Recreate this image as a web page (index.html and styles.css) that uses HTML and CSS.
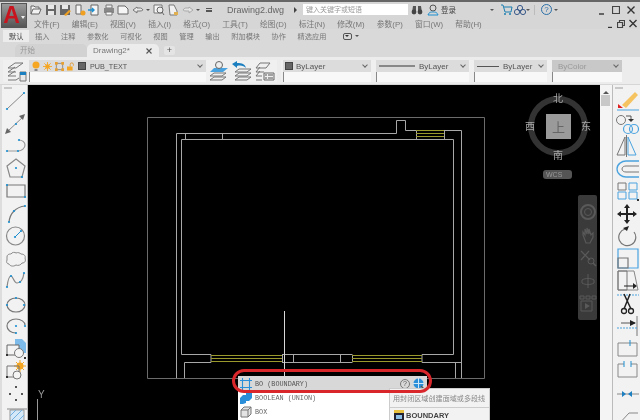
FILE: index.html
```html
<!DOCTYPE html>
<html lang="en">
<head>
    <meta charset="UTF-8">
    <title>Drawing2.dwg</title>
    <link rel="stylesheet" href="styles.css">
</head>
<body>
    <header class="top">
        <div class="logo"><span class="logo-a">A</span><span class="logo-arrow"></span></div>
        <div class="top-rows">
            <div class="title-row">
                <div class="quick">
                    <svg width="12" height="12" viewBox="0 0 12 12"><path d="M1 10V2h3l1 1h4v2M1 10l2-5h8l-2 5z" fill="#f2f2f2" stroke="#666"/></svg>
                    <svg width="12" height="12" viewBox="0 0 12 12"><path d="M1 1h10v10H1z" fill="#666"/><path d="M3 1h6v4H3zM3 7h6v4H3z" fill="#e8e8e8"/></svg>
                    <svg width="12" height="12" viewBox="0 0 12 12"><path d="M1 1h10v10H1z" fill="#666"/><path d="M3 1h6v4H3z" fill="#e8e8e8"/><path d="M5 11l5-5 2 1-5 5z" fill="#f0a020"/></svg>
                    <svg width="12" height="12" viewBox="0 0 12 12"><path d="M2 1h5v9H2z" fill="#f5f5f5" stroke="#666"/><circle cx="9" cy="9" r="2.5" fill="#f0a020"/></svg>
                    <svg width="12" height="12" viewBox="0 0 12 12"><path d="M3 1h7v10H3z" fill="#f5f5f5" stroke="#666"/><path d="M0 6h6M4 4l2 2-2 2" fill="none" stroke="#1c8fd0" stroke-width="1.4"/></svg>
                    <svg width="12" height="12" viewBox="0 0 12 12"><path d="M3 1h6v3H3z" fill="#eee" stroke="#777"/><path d="M1 4h10v5H1z" fill="#888"/><path d="M3 8h6v3H3z" fill="#fff" stroke="#777"/></svg>
                    <svg width="12" height="12" viewBox="0 0 12 12"><path d="M1 2h7l3 3v5H1z" fill="#f5f5f5" stroke="#666"/></svg>
                    <svg width="12" height="12" viewBox="0 0 12 12"><path d="M5 3L1 6l4 3V7h3c2 0 3-1 3-1-1-2-3-2-3-2H5z" fill="#e8e8e8" stroke="#777"/></svg>
                    <span class="caret"></span>
                    <svg width="12" height="12" viewBox="0 0 12 12"><path d="M1 1h8v8H1z" fill="#f5f5f5" stroke="#777"/><circle cx="7" cy="6" r="3" fill="#eee" stroke="#666"/><path d="M9 8l2 3" stroke="#666"/></svg>
                    <svg width="12" height="12" viewBox="0 0 12 12"><path d="M2 1h5l3 6v4H3z" fill="#f0f0f0" stroke="#777"/><path d="M7 8h4v3H7z" fill="#e0b050"/></svg>
                    <svg width="12" height="12" viewBox="0 0 12 12"><path d="M7 3l4 3-4 3V7H4C2 7 1 6 1 6c1-2 3-2 3-2h3z" fill="#e4e4e4" stroke="#aaa"/></svg>
                    <span class="caret"></span>
                    <span class="more"></span>
                </div>
                <div class="doc-title">Drawing2.dwg</div>
                <span class="play"></span>
                <div class="search">键入关键字或短语</div>
                <svg class="binoc" width="12" height="11" viewBox="0 0 12 11"><path d="M1 9l1-7h3v7zM7 9V2h3l1 7z" fill="#555"/><circle cx="3" cy="8" r="2.4" fill="#444"/><circle cx="9" cy="8" r="2.4" fill="#444"/></svg>
                <svg class="user" width="12" height="12" viewBox="0 0 12 12"><circle cx="6" cy="4" r="3" fill="none" stroke="#555"/><path d="M1 11c1-3 3-3 5-3s4 0 5 3z" fill="none" stroke="#1c8fd0"/></svg>
                <span class="login">登录</span>
                <span class="caret caret-login"></span>
                <svg class="cart" width="13" height="12" viewBox="0 0 13 12"><path d="M1 1h2l2 7h6l1-5H4" fill="none" stroke="#1c7fb0"/><circle cx="5" cy="10" r="1" fill="#1c7fb0"/><circle cx="10" cy="10" r="1" fill="#1c7fb0"/></svg>
                <svg class="people" width="12" height="12" viewBox="0 0 12 12"><circle cx="6" cy="4" r="2.6" fill="none" stroke="#3a5a8a"/><circle cx="3" cy="8" r="2.6" fill="none" stroke="#3a5a8a"/><circle cx="9" cy="8" r="2.6" fill="none" stroke="#3a5a8a"/></svg>
                <span class="caret"></span>
                <span class="sep"></span>
                <span class="help">?</span>
                <span class="caret"></span>
                <div class="win-ctrl">
                    <svg width="7" height="10" viewBox="0 0 7 10"><path d="M1 9h5" stroke="#333" stroke-width="1.400"/></svg>
                    <svg width="8" height="10" viewBox="0 0 8 10"><path d="M.5 1.500h7v7h-7z" fill="none" stroke="#444" stroke-width="1.200"/></svg>
                    <svg width="8" height="10" viewBox="0 0 8 10"><path d="M.5 1.500l7 7M7.500 1.500l-7 7" stroke="#333" stroke-width="1.400"/></svg>
                </div>
            </div>
            <nav class="menu-row">
                <span>文件(F)</span><span>编辑(E)</span><span>视图(V)</span><span>插入(I)</span><span>格式(O)</span><span>工具(T)</span>
                <span>绘图(D)</span><span>标注(N)</span><span>修改(M)</span><span>参数(P)</span><span>窗口(W)</span><span>帮助(H)</span>
                <div class="win-ctrl small">
                    <svg width="6" height="9" viewBox="0 0 6 9"><path d="M1 8.500h4" stroke="#333" stroke-width="1.400"/></svg>
                    <svg width="8" height="9" viewBox="0 0 8 9"><path d="M.5 3.500h5v5h-5zM2.500 3.500v-2h5v5h-2" fill="none" stroke="#444" stroke-width="1.200"/></svg>
                    <svg width="8" height="9" viewBox="0 0 8 9"><path d="M.5 1l7 7M7.500 1l-7 7" stroke="#333" stroke-width="1.400"/></svg>
                </div>
            </nav>
        </div>
    </header>

    <nav class="ribbon-tabs">
        <span class="active">默认</span><span>插入</span><span>注释</span><span>参数化</span><span>可视化</span><span>视图</span>
        <span>管理</span><span>输出</span><span>附加模块</span><span>协作</span><span>精选应用</span>
        <span class="tab-drop"><i></i></span><span class="caret"></span>
    </nav>

    <div class="doc-tabs">
        <div class="doc-tab">开始</div>
        <div class="doc-tab current">Drawing2*
            <svg class="tab-close" width="6" height="6" viewBox="0 0 6 6"><path d="M.5.500l5 5M5.500.500l-5 5" stroke="#555" stroke-width="1.100"/></svg>
        </div>
        <div class="doc-add">+</div>
    </div>

    <div class="toolbar">
        <div class="tool-group layer-group">
            <svg width="20" height="22" viewBox="0 0 20 22"><path d="M1 8l7-5h8l-7 5zM1 12l7-5M1 16l7-5M1 12h8M1 16h8M1 20h8l3-2" fill="none" stroke="#777"/><path d="M13 12h6v9h-6z" fill="#e8e8e8" stroke="#777"/><path d="M13 12h6v3h-6z" fill="#1c7fc0"/></svg>
            <div class="combo-stack layer-combo">
                <div class="combo">
                    <svg width="8" height="10" viewBox="0 0 8 10"><circle cx="4" cy="4" r="3.500" fill="#f5a623"/><path d="M2.500 8h3v2h-3z" fill="#888"/></svg>
                    <svg width="9" height="9" viewBox="0 0 10 10"><circle cx="5" cy="5" r="2.600" fill="#f5a623"/><path d="M5 0v10M0 5h10M1.500 1.500l7 7M8.500 1.500l-7 7" stroke="#f5a623"/></svg>
                    <svg width="9" height="9" viewBox="0 0 10 10"><path d="M1.500 1.500h7v7h-7z" fill="none" stroke="#888"/><path d="M0 0h3v3H0zM7 0h3v3H7zM0 7h3v3H0zM7 7h3v3H7z" fill="#e8a030"/></svg>
                    <svg width="8" height="9" viewBox="0 0 10 10"><path d="M0 5h7v5H0z" fill="#f5a623"/><path d="M4 5V2.500a2 2 0 0 1 4 0V4" fill="none" stroke="#e09020"/></svg>
                    <span class="swatch"></span>
                    <span class="combo-text">PUB_TEXT</span>
                    <span class="chev"></span>
                </div>
                <div class="combo-under"></div>
            </div>
            <div class="layer-tools">
                <svg width="20" height="20" viewBox="0 0 20 20"><path d="M1 19l4-3h12l-4 3zM1 15l4-3h12l-4 3z" fill="none" stroke="#777"/><path d="M1 11l4-4h14l-5 4z" fill="#4aa3df"/><circle cx="10" cy="4" r="3.500" fill="#eee" stroke="#666"/></svg>
                <svg width="20" height="20" viewBox="0 0 20 20"><path d="M3 19l4-3h12l-4 3zM3 15l4-3h12l-4 3zM3 11l4-3h12l-4 3z" fill="none" stroke="#777"/><path d="M0 3l5-3v2c5 0 8 1 9 5-2-2-5-3-9-2v2z" fill="#1c7fc0"/></svg>
                <svg width="20" height="20" viewBox="0 0 20 20"><path d="M1 7l4-5h10l-4 5zM1 11l4-5M1 15l4-5M1 11h8M1 15h6M1 19h6" fill="none" stroke="#777"/><path d="M9 12h10v7H9z" fill="#eee" stroke="#666"/><path d="M10 14h2M13 14h5M10 17h2M13 17h5" stroke="#555"/></svg>
            </div>
        </div>
        <div class="tool-group prop-group">
            <div class="combo-stack w1">
                <div class="combo"><span class="swatch"></span><span class="combo-text">ByLayer</span><span class="chev"></span></div>
                <div class="combo-under"></div>
            </div>
            <div class="combo-stack w2">
                <div class="combo"><span class="line thick"></span><span class="combo-text">ByLayer</span><span class="chev"></span></div>
                <div class="combo-under"></div>
            </div>
            <div class="combo-stack w3">
                <div class="combo"><span class="line"></span><span class="combo-text">ByLayer</span><span class="chev"></span></div>
                <div class="combo-under"></div>
            </div>
            <div class="combo-stack w4">
                <div class="combo disabled"><span class="combo-text">ByColor</span><span class="chev"></span></div>
                <div class="combo-under"></div>
            </div>
        </div>
    </div>

    <main class="workspace">
        <aside class="side-tools left">
            <svg width="24" height="22" viewBox="0 0 24 22"><path d="M4 19L21 3" stroke="#888"/><circle cx="4" cy="19" r="1.100" fill="#1c8fd0"/><circle cx="21" cy="3" r="1.100" fill="#1c8fd0"/></svg>
            <svg width="24" height="22" viewBox="0 0 24 22"><path d="M4 19L21 3" stroke="#888"/><path d="M2 21l2-6 4 4zM22 1l-2 6-4-4z" fill="#666"/><circle cx="13" cy="11" r="1.100" fill="#1c8fd0"/></svg>
            <svg width="24" height="22" viewBox="0 0 24 22"><path d="M4 16h11c4 0 7-3 7-6s-3-5-6-5" fill="none" stroke="#999" stroke-width="1.200"/><circle cx="4" cy="16" r="1.100" fill="#1c8fd0"/><circle cx="15" cy="16" r="1.100" fill="#1c8fd0"/><circle cx="16" cy="5" r="1.100" fill="#1c8fd0"/></svg>
            <svg width="24" height="22" viewBox="0 0 24 22"><path d="M13 1l9 7-3 11H7L4 8z" fill="none" stroke="#888" stroke-width="1.200"/><circle cx="13" cy="10" r="1.100" fill="#1c8fd0"/><circle cx="19" cy="19" r="1.100" fill="#1c8fd0"/></svg>
            <svg width="24" height="22" viewBox="0 0 24 22"><path d="M4 5h18v12H4z" fill="none" stroke="#777" stroke-width="1.200"/><circle cx="4" cy="5" r="1.100" fill="#1c8fd0"/><circle cx="22" cy="17" r="1.100" fill="#1c8fd0"/></svg>
            <svg width="24" height="22" viewBox="0 0 24 22"><path d="M6 19C7 10 13 4 22 3" fill="none" stroke="#777" stroke-width="1.200"/><circle cx="6" cy="19" r="1.100" fill="#1c8fd0"/><circle cx="11" cy="8" r="1.100" fill="#1c8fd0"/><circle cx="22" cy="3" r="1.100" fill="#1c8fd0"/></svg>
            <svg width="24" height="22" viewBox="0 0 24 22"><circle cx="12.500" cy="11" r="9" fill="none" stroke="#888" stroke-width="1.200"/><path d="M12 12l6-6" stroke="#1c8fd0"/><circle cx="12" cy="12" r="1.100" fill="#1c8fd0"/><circle cx="18" cy="6" r="1.100" fill="#1c8fd0"/></svg>
            <svg width="24" height="22" viewBox="0 0 24 22"><path d="M4 8c0-3 3-3 4-3 1-2 4-2 5-1 2-1 4 0 5 1 3 0 5 2 4 4 1 3 0 5-3 5-1 2-4 3-6 2-3 2-6 1-7-1-2 0-3-2-2-4z" transform="translate(0 1)" fill="none" stroke="#888"/></svg>
            <svg width="24" height="22" viewBox="0 0 24 22"><path d="M4 17c1-8 2-11 4-11 2 0 3 7 6 7s6-3 7-10" fill="none" stroke="#888" stroke-width="1.200"/><circle cx="4" cy="17" r="1.100" fill="#1c8fd0"/><circle cx="8" cy="6" r="1.100" fill="#1c8fd0"/><circle cx="17" cy="12" r="1.100" fill="#1c8fd0"/><circle cx="21" cy="3" r="1.100" fill="#1c8fd0"/></svg>
            <svg width="24" height="22" viewBox="0 0 24 22"><ellipse cx="13" cy="12" rx="9" ry="7" fill="none" stroke="#777" stroke-width="1.200"/><circle cx="4" cy="12" r="1.100" fill="#1c8fd0"/><circle cx="13" cy="5" r="1.100" fill="#1c8fd0"/><circle cx="21" cy="12" r="1.100" fill="#1c8fd0"/></svg>
            <svg width="24" height="22" viewBox="0 0 24 22"><path d="M22 10c0-3-4-6-9-6S4 7 4 11s4 7 9 7" fill="none" stroke="#777" stroke-width="1.200"/><circle cx="13" cy="11" r="1.100" fill="#1c8fd0"/><circle cx="22" cy="11" r="1.100" fill="#1c8fd0"/><circle cx="13" cy="18" r="1.100" fill="#1c8fd0"/></svg>
            <svg width="24" height="22" viewBox="0 0 24 22"><path d="M12 1h7l4 4v10H12z" fill="#7dbcea"/><path d="M4 7h12v10H4z" fill="#f4f4f4" stroke="#666"/><circle cx="16" cy="15" r="4.500" fill="#f4f4f4" stroke="#777"/><path d="M3 16h2v2H3zM21 19h2v2h-2z" fill="#333"/></svg>
            <svg width="24" height="22" viewBox="0 0 24 22"><circle cx="17" cy="6" r="3.500" fill="#f5a623"/><path d="M17 0v12M11 6h12M13 2l8 8M21 2l-8 8" stroke="#f5a623"/><path d="M4 6h12v11H4z" fill="none" stroke="#777"/><circle cx="14" cy="15" r="4" fill="#f4f4f4" stroke="#777"/><path d="M3 16h2v2H3z" fill="#333"/></svg>
            <svg width="24" height="22" viewBox="0 0 24 22"><path d="M12 3h2v2h-2zM6 10h2v2H6zM18 10h2v2h-2zM12 16h2v2h-2z" fill="#555"/></svg>
            <svg width="24" height="22" viewBox="0 0 24 22"><path d="M7 5h14v17H7z" fill="#d4e8f7" stroke="#999"/><path d="M7 11l6-6M7 17l12-12M9 22l12-12M15 22l6-6" stroke="#6fb0e0"/><path d="M4 4h20" stroke="#888"/></svg>
        </aside>

        <div class="canvas">
            <svg class="drawing" viewBox="28 85 572 335" width="572" height="335">
                <path d="M147.500 117.500H484.500V378.500H232M147.500 117.500V378.500H232" fill="none" stroke="#6b6b6b"/>
                <g fill="none" stroke="#a8a8a8">
                    <path d="M176.500 378V133.500H396.500V120.500H405.500V130.500H461.500V378"/>
                    <path d="M185.500 133.500V139M222.500 133.500V139"/>
                    <path d="M181.500 354.500V139.500H453.500V354.500H422V362.500H461.500M455.500 362.500V378"/>
                    <path d="M181.500 354.500H211V362.500H184.500V378"/>
                    <path d="M282.500 354.500V362.500M293.500 354.500V362.500M340.500 354.500V362.500M352.500 354.500V362.500M282 354.500H352M282 362.500H352"/>
                    <path d="M416.500 130V139M444.500 130V139"/>
                </g>
                <path d="M284.500 311V376" stroke="#d8d8d8"/>
                <g stroke="#9a9a2c">
                    <path d="M416 130.500H444M416 133.500H444M416 136.500H444"/>
                    <path d="M211 355.500H282M211 358.500H282M211 361.500H282"/>
                    <path d="M352 355.500H422M352 358.500H422M352 361.500H422"/>
                </g>
                <text class="axis-y" x="38" y="398">Y</text>
                <path d="M37.500 399V420" stroke="#999"/>
            </svg>

            <div class="viewcube">
                <div class="ring"></div>
                <div class="cube-face"><span>上</span></div>
                <span class="dir north">北</span>
                <span class="dir south">南</span>
                <span class="dir west">西</span>
                <span class="dir east">东</span>
            </div>
            <div class="wcs">WCS<i></i></div>

            <div class="navbar">
                <svg width="18" height="18" viewBox="0 0 18 18"><circle cx="9" cy="9" r="7" fill="none" stroke="#595959" stroke-width="2"/><circle cx="9" cy="9" r="3.500" fill="none" stroke="#595959"/></svg>
                <svg width="18" height="18" viewBox="0 0 18 18"><path d="M4 9V6l2 3V3l2 5V2l2 6V3l2 6 2-2v4l-3 6H7z" fill="none" stroke="#595959" stroke-width="1.200"/></svg>
                <svg width="18" height="18" viewBox="0 0 18 18"><path d="M2 2l9 9M2 11l8-9" stroke="#595959" stroke-width="1.200"/><circle cx="12" cy="12" r="3" fill="none" stroke="#595959"/><path d="M14 14l3 3" stroke="#595959" stroke-width="1.500"/></svg>
                <svg width="18" height="18" viewBox="0 0 18 18"><path d="M9 2v14M3 8c3-2 9-2 12 0v3c-3 2-9 2-12 0z" fill="none" stroke="#595959"/></svg>
                <svg width="18" height="18" viewBox="0 0 18 18"><path d="M1 1h4v3H1zM7 1h4v3H7zM13 1h4v3h-4z" fill="none" stroke="#595959"/><path d="M2 6h11v10H2z" fill="none" stroke="#595959"/><path d="M6 8l5 3-5 3z" fill="#595959"/></svg>
            </div>

            <div class="suggest">
                <div class="suggest-row current">
                    <svg width="12" height="12" viewBox="0 0 12 12"><path d="M2.500 0v12M9.500 0v12M0 2.500h12M0 9.500h12" stroke="#2a8fd8" stroke-width="1.100"/></svg>
                    <span>BO (BOUNDARY)</span>
                    <span class="row-help">?</span>
                    <svg class="row-globe" width="12" height="12" viewBox="0 0 12 12"><circle cx="5.500" cy="5.500" r="5" fill="#2a8fd8"/><path d="M5.500 0v11M0 5.500h11" stroke="#cfe6f7"/><path d="M8 8l3 3" stroke="#555" stroke-width="1.500"/></svg>
                </div>
                <div class="suggest-row">
                    <svg width="12" height="12" viewBox="0 0 12 12"><path d="M0 6l3-3h3V1l3-1h3v6l-3 3H6v2l-3 1H0z" fill="#2a8fd8"/></svg>
                    <span>BOOLEAN (UNION)</span>
                </div>
                <div class="suggest-row">
                    <svg width="12" height="12" viewBox="0 0 12 12"><path d="M1 4l3-3h7v7l-3 3H1z" fill="#e4e4e4" stroke="#777"/><path d="M1 4h7v7M8 4l3-3" fill="none" stroke="#777"/></svg>
                    <span>BOX</span>
                </div>
            </div>
            <div class="tooltip">
                <div class="tip-text">用封闭区域创建面域或多段线</div>
                <div class="tip-title">
                    <svg width="10" height="10" viewBox="0 0 10 10"><path d="M0 0h10v10H0z" fill="#223"/><path d="M0 0h10v3H0z" fill="#e8c040"/><path d="M2 5h6v4H2z" fill="#8cc0e8"/></svg>
                    BOUNDARY
                </div>
            </div>
            <div class="red-mark"></div>
        </div>

        <div class="scroller">
            <span class="scroll-up"></span>
            <span class="scroll-thumb"></span>
        </div>

        <aside class="side-tools right">
            <svg width="24" height="22" viewBox="0 0 24 22"><path d="M7 15L20 2l3 3-12 13z" fill="#f5c460"/><path d="M3 14l5 4H3z" fill="#e02020"/><path d="M2 20h22" stroke="#4aa3df"/></svg>
            <svg width="24" height="22" viewBox="0 0 24 22"><circle cx="6" cy="7" r="4.500" fill="none" stroke="#777"/><path d="M11 3h5v3" fill="none" stroke="#555"/><path d="M13 6h6l-3 3z" fill="#333"/><circle cx="13" cy="16" r="4.500" fill="none" stroke="#4aa3df" stroke-width="1.200"/><circle cx="19" cy="16" r="4.500" fill="none" stroke="#4aa3df" stroke-width="1.200"/></svg>
            <svg width="24" height="22" viewBox="0 0 24 22"><path d="M10 2v18H2z" fill="none" stroke="#777"/><path d="M13 2v18h8z" fill="none" stroke="#4aa3df"/><path d="M11.500 0v22" stroke="#777"/></svg>
            <svg width="24" height="22" viewBox="0 0 24 22"><path d="M24 3H11C7 3 2 6 2 11s5 8 9 8h13" fill="none" stroke="#4aa3df" stroke-width="1.300"/><path d="M24 8H11c-2 0-4 1-4 3s2 3 4 3h13" fill="none" stroke="#777"/></svg>
            <svg width="24" height="22" viewBox="0 0 24 22"><path d="M3 3h8v7H3z" fill="none" stroke="#777"/><path d="M14 3h8v7h-8zM3 12h8v7H3zM14 12h8v7h-8z" fill="none" stroke="#4aa3df"/><path d="M22 19h2v2h-2z" fill="#333"/></svg>
            <svg width="24" height="22" viewBox="0 0 24 22"><path d="M12 1l3 4h-2v5h5V8l4 3-4 3v-2h-5v5h2l-3 4-3-4h2v-5H6v2l-4-3 4-3v2h5V5H9z" fill="#222"/></svg>
            <svg width="24" height="22" viewBox="0 0 24 22"><path d="M10 4a8.500 8.500 0 1 0 9 3" fill="none" stroke="#777" stroke-width="1.200"/><path d="M8 3l6-2-2 5z" fill="#222"/></svg>
            <svg width="24" height="22" viewBox="0 0 24 22"><path d="M3 1h20v19H3z" fill="none" stroke="#4aa3df" stroke-width="1.200"/><path d="M3 10h10v10H3z" fill="none" stroke="#777" stroke-width="1.200"/></svg>
            <svg width="24" height="22" viewBox="0 0 24 22"><path d="M3 1h16l4 19H3z" fill="none" stroke="#888"/><path d="M3 1h9v19H3z" fill="none" stroke="#777"/><path d="M9 16h9" stroke="#222"/><path d="M18 13l4 3-4 3z" fill="#222"/></svg>
            <svg width="24" height="22" viewBox="0 0 24 22"><path d="M2 2h22" stroke="#4aa3df" stroke-dasharray="2 1"/><path d="M9 1l7 15M15 1l-6 15" stroke="#222" stroke-width="1.500"/><circle cx="9" cy="18" r="2.500" fill="none" stroke="#222" stroke-width="1.300"/><circle cx="16" cy="18" r="2.500" fill="none" stroke="#222" stroke-width="1.300"/></svg>
            <svg width="24" height="22" viewBox="0 0 24 22"><path d="M22 1v20" stroke="#777"/><path d="M6 8h14" stroke="#555"/><path d="M15 5l6 3-6 3z" fill="#222"/><path d="M2 13h20" stroke="#4aa3df" stroke-dasharray="2 1"/></svg>
            <svg width="24" height="22" viewBox="0 0 24 22"><path d="M3 5h19v13H3z" fill="none" stroke="#888"/><path d="M15 2v6" stroke="#1c8fd0"/></svg>
            <svg width="24" height="22" viewBox="0 0 24 22"><path d="M9 4H3v13h19V4h-6" fill="none" stroke="#888"/><path d="M9 1v6M16 1v6" stroke="#1c8fd0"/></svg>
            <svg width="24" height="22" viewBox="0 0 24 22"><path d="M2 11h22" stroke="#888"/><path d="M7 8l4 3-4 3zM17 8l-4 3 4 3z" fill="#1c7fc0"/></svg>
            <svg width="24" height="22" viewBox="0 0 24 22"><path d="M2 21L14 8h9" fill="none" stroke="#888"/></svg>
        </aside>
    </main>
</body>
</html>
```

FILE: styles.css
```css
* {
    box-sizing: border-box;
}

html, body {
    margin: 0;
    height: 100%;
}

html {
    background: #000;
}

body {
    width: 640px;
    height: 420px;
    overflow: hidden;
    display: flex;
    flex-direction: column;
    font-family: "Liberation Sans", "Noto Sans CJK SC", sans-serif;
    color: #555;
    background: #d6d6d6;
    /* the shot is a scaled down capture, everything is a bit soft */
    filter: blur(0.35px);
}

svg {
    display: block;
    flex: none;
}

/* title + menu */
.top {
    display: flex;
    height: 29px;
    border-top: 2px solid #666;
    background: #d6d6d6;
}

.logo {
    width: 26px;
    height: 25px;
    margin: 1px 0 0 1px;
    display: flex;
    align-items: center;
    justify-content: center;
    gap: 1px;
    background: linear-gradient(#9a9a9a, #555);
    border: 1px solid #555;
}

.logo-a {
    font: bold 23px "Liberation Sans", sans-serif;
    color: #c8141e;
    line-height: 1;
}

.logo-arrow {
    border: 2px solid transparent;
    border-top: 3px solid #eee;
    margin-top: 6px;
}

.top-rows {
    flex: 1;
    display: flex;
    flex-direction: column;
}

.title-row {
    height: 15px;
    display: flex;
    align-items: center;
    padding-left: 3px;
}

.quick {
    display: flex;
    align-items: center;
    gap: 2.500px;
    width: 193px;
}

.caret {
    width: 0;
    height: 0;
    border: 2px solid transparent;
    border-top: 2px solid #555;
    margin-top: 2px;
}

.more {
    width: 6px;
    height: 4px;
    border-top: 1px solid #555;
    border-bottom: 2px solid #555;
    margin-left: 3px;
}

.doc-title {
    width: 50px;
    margin-left: 4px;
    font-size: 9px;
    color: #666;
    white-space: nowrap;
}

.play {
    width: 0;
    height: 0;
    margin-left: 17px;
    border: 3px solid transparent;
    border-left: 3px solid #444;
}

.search {
    width: 105px;
    height: 11px;
    margin-left: 3px;
    padding-left: 3px;
    background: #fff;
    font-size: 7px;
    line-height: 11px;
    color: #999;
}

.binoc {
    margin-left: 3px;
}

.user {
    margin-left: 4px;
}

.login {
    margin-left: 2px;
    font-size: 7.500px;
    color: #444;
}

.caret-login {
    margin-left: 34px;
}

.cart {
    margin-left: 6px;
}

.people {
    margin-left: 1px;
}

.sep {
    width: 1px;
    height: 10px;
    margin: 0 6px 0 4px;
    background: #bbb;
}

.help {
    width: 11px;
    height: 11px;
    margin-right: 2px;
    border: 1px solid #2a6fa8;
    border-radius: 50%;
    font-size: 8px;
    line-height: 9px;
    text-align: center;
    color: #2a6fa8;
}

.win-ctrl {
    margin-left: auto;
    display: flex;
    align-items: center;
    gap: 7px;
    padding-right: 5px;
}

.win-ctrl.small {
    gap: 4px;
    padding-right: 3px;
}

.menu-row {
    height: 12px;
    display: flex;
    align-items: center;
    gap: 12.200px;
    padding-left: 7px;
    font-size: 7.800px;
    color: #777;
    white-space: nowrap;
}

/* ribbon tab strip */
.ribbon-tabs {
    height: 14px;
    display: flex;
    align-items: center;
    gap: 11.600px;
    padding-left: 9px;
    background: #d9d9d9;
    font-size: 7.200px;
    color: #777;
    white-space: nowrap;
}

.ribbon-tabs .active {
    margin: 0 -6px 0 -6px;
    padding: 1px 6px;
    background: #ececec;
    color: #444;
}

.tab-drop {
    margin-left: 5px;
    width: 9px;
    height: 7px;
    border: 1px solid #555;
    border-radius: 2px;
    display: flex;
    justify-content: center;
}

.tab-drop i {
    margin-top: 1px;
    border: 2px solid transparent;
    border-top: 2px solid #333;
}

.ribbon-tabs .caret {
    margin-left: -9px;
}

/* file tabs */
.doc-tabs {
    height: 14px;
    display: flex;
    align-items: flex-end;
    padding-left: 15px;
    background: #d9d9d9;
    font-size: 7.500px;
}

.doc-tab {
    width: 72px;
    height: 13px;
    padding-left: 5px;
    line-height: 13px;
    background: #d2d2d2;
    border-radius: 5px 5px 0 0;
    color: #999;
}

.doc-tab.current {
    display: flex;
    align-items: center;
    justify-content: space-between;
    padding: 0 7px 0 6px;
    font-size: 8px;
    background: #ececec;
    color: #777;
}

.doc-add {
    width: 11px;
    height: 9px;
    margin: 0 0 2px 5px;
    background: #e4e4e4;
    border-radius: 2px;
    font-size: 9px;
    line-height: 9px;
    text-align: center;
}

/* layer + property bar */
.toolbar {
    height: 27px;
    display: flex;
    gap: 4px;
    padding: 3px 0 2px 3px;
    background: #ececec;
}

.tool-group {
    display: flex;
    background: #f0f0f0;
}

.layer-group {
    width: 274px;
    gap: 2px;
    padding-left: 4px;
}

.prop-group {
    gap: 5px;
    padding-left: 2px;
}

.combo-stack {
    display: flex;
    flex-direction: column;
}

.layer-combo {
    width: 177px;
}

.w1 { width: 88px; }
.w2 { width: 93px; }
.w3 { width: 73px; }
.w4 { width: 70px; }

.combo {
    height: 12px;
    display: flex;
    align-items: center;
    gap: 2px;
    padding: 0 3px 0 2px;
    background: #dcdcdc;
    font-size: 8px;
    color: #555;
}

.layer-combo .combo {
    gap: 3px;
    padding-left: 3px;
    font-size: 7.200px;
}

.combo.disabled {
    background: #c8c8c8;
    color: #999;
    padding-left: 5px;
}

.combo-under {
    flex: 1;
    background: #f8f8f8;
    border-left: 1px solid #888;
}

.swatch {
    width: 8px;
    height: 8px;
    background: #666;
    border: 1px solid #444;
}

.combo-text {
    margin-left: 1px;
    white-space: nowrap;
}

.line {
    width: 22px;
    height: 1px;
    margin: 0 1px;
    background: #555;
}

.line.thick {
    width: 36px;
    height: 2px;
    background: #888;
}

.chev {
    width: 4px;
    height: 4px;
    margin: -2px 1px 0 auto;
    border-right: 1px solid #666;
    border-bottom: 1px solid #666;
    transform: rotate(45deg);
}

.layer-tools {
    display: flex;
    align-items: center;
    gap: 3px;
    padding-left: 1px;
}

/* main area */
.workspace {
    flex: 1;
    display: flex;
    min-height: 0;
    margin-top: 1px;
    background: #f0f0f0;
}

.side-tools {
    display: grid;
    grid-auto-rows: 22.500px;
    justify-items: center;
    align-content: start;
    background: linear-gradient(#c8c8c8, #c8c8c8) 2px 2px / 8px 2px no-repeat, #f2f2f2;
    padding-top: 5px;
}

.side-tools.left {
    width: 28px;
    border-right: 1px solid #bbb;
    border-left: 2px solid #ddd;
}

.side-tools.right {
    width: 28px;
    border-left: 1px solid #bbb;
}

.canvas {
    position: relative;
    width: 572px;
    background: #000;
    overflow: hidden;
}

.drawing {
    position: absolute;
    left: 0;
    top: 0;
}

.axis-y {
    font: 10px "Liberation Sans", sans-serif;
    fill: #999;
}

.scroller {
    position: relative;
    width: 12px;
    background: #f4f4f4;
}

.scroll-up {
    position: absolute;
    left: 3px;
    top: 3px;
    border: 3px solid transparent;
    border-bottom: 3px solid #555;
}

.scroll-thumb {
    position: absolute;
    left: 1px;
    top: 10px;
    width: 9px;
    height: 11px;
    background: #c8c8c8;
}

/* view cube, canvas coords */
.viewcube {
    position: absolute;
    left: 500px;
    top: 11px;
    width: 60px;
    height: 60px;
}

.ring {
    position: absolute;
    inset: 0;
    border: 6px solid #333;
    border-radius: 50%;
}

.cube-face {
    position: absolute;
    left: 18px;
    top: 18px;
    width: 25px;
    height: 25px;
    background: #9a9a9a;
    font: 13px/25px "Noto Sans CJK SC", sans-serif;
    text-align: center;
    color: #666;
}

.dir {
    position: absolute;
    font: 10px/12px "Noto Sans CJK SC", sans-serif;
    color: #a8a8a8;
}

.north { left: 25px; top: -4px; }
.south { left: 25px; top: 53px; }
.west { left: -3px; top: 24px; }
.east { left: 53px; top: 24px; }

.wcs {
    position: absolute;
    left: 515px;
    top: 85px;
    width: 29px;
    height: 9px;
    padding-left: 3px;
    background: #555;
    border-radius: 3px;
    font-size: 7px;
    line-height: 9px;
    color: #999;
}

.navbar {
    position: absolute;
    left: 550px;
    top: 110px;
    width: 19px;
    height: 125px;
    padding-top: 8px;
    display: flex;
    flex-direction: column;
    align-items: center;
    gap: 5px;
    background: #3a3a3a;
    border-radius: 2px;
}

/* command suggestion list */
.suggest {
    position: absolute;
    left: 210px;
    top: 291px;
    width: 189px;
    height: 44px;
    background: #fff;
    font: 6.800px "Liberation Mono", monospace;
    color: #666;
}

.suggest-row {
    height: 14px;
    display: flex;
    align-items: center;
    gap: 3px;
    padding-left: 2px;
    white-space: pre;
}

.suggest-row.current {
    height: 15px;
    background: #d8d8d8;
    color: #555;
}

.row-help {
    width: 10px;
    height: 10px;
    margin-left: auto;
    border: 1px solid #777;
    border-radius: 50%;
    font: 7px/8px "Liberation Sans", sans-serif;
    text-align: center;
}

.row-globe {
    margin-right: 2px;
}

.red-mark {
    position: absolute;
    left: 204px;
    top: 284px;
    width: 200px;
    height: 24px;
    border: 3px solid #d8262a;
    border-radius: 12px;
}

.tooltip {
    position: absolute;
    left: 361px;
    top: 303px;
    width: 101px;
    height: 33px;
    background: #f2f2f2;
    border: 1px solid #ccc;
}

.tip-text {
    height: 19px;
    padding-left: 3px;
    border-bottom: 1px solid #ccc;
    font: 7.100px/19px "Noto Sans CJK SC", sans-serif;
    color: #888;
    white-space: nowrap;
}

.tip-title {
    display: flex;
    align-items: center;
    gap: 2px;
    padding: 2px 0 0 4px;
    font-size: 7.500px;
    font-weight: bold;
    color: #444;
}
```
